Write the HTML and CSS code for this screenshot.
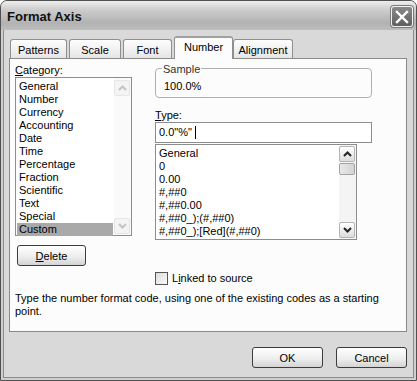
FILE: index.html
```html
<!DOCTYPE html>
<html lang="en">
<head>
  <meta charset="UTF-8" />
  <title>Format Axis</title>
  <link rel="stylesheet" href="styles.css">
</head>
<body>
  <div class="window">
    <div class="titlebar">
      <span class="title">Format Axis</span>
      <span class="close">
        <svg width="14" height="14" viewBox="0 0 14 14"><path d="M2 2L12 12M12 2L2 12" stroke="#fff" stroke-width="2.4" stroke-linecap="square"/></svg>
      </span>
    </div>
    <div class="client">
      <div class="tabs">
        <span class="tab tab-patterns">Patterns</span>
        <span class="tab tab-scale">Scale</span>
        <span class="tab tab-font">Font</span>
        <span class="tab tab-number active">Number</span>
        <span class="tab tab-align">Alignment</span>
      </div>
      <div class="panel">
        <div class="cols">
          <div class="col-left">
            <div class="lbl"><u>C</u>ategory:</div>
            <div class="listbox cat">
              <ul class="items">
                <li>General</li>
                <li>Number</li>
                <li>Currency</li>
                <li>Accounting</li>
                <li>Date</li>
                <li>Time</li>
                <li>Percentage</li>
                <li>Fraction</li>
                <li>Scientific</li>
                <li>Text</li>
                <li>Special</li>
                <li class="sel">Custom</li>
              </ul>
              <div class="vscroll off">
                <span class="sbtn"><svg width="9" height="6" viewBox="0 0 9 6"><path d="M1 5L4.5 1.5L8 5" fill="none" stroke="#c4c4c4" stroke-width="2"/></svg></span>
                <span class="track"></span>
                <span class="sbtn"><svg width="9" height="6" viewBox="0 0 9 6"><path d="M1 1L4.5 4.5L8 1" fill="none" stroke="#c4c4c4" stroke-width="2"/></svg></span>
              </div>
            </div>
            <button class="btn delete"><u>D</u>elete</button>
          </div>
          <div class="col-right">
            <div class="sample">
              <span class="legend">Sample</span>
              <div class="sample-val">100.0%</div>
            </div>
            <div class="lbl type-lbl"><u>T</u>ype:</div>
            <div class="input">0.0"%"&nbsp;<span class="caret"></span></div>
            <div class="listbox types">
              <ul class="items">
                <li>General</li>
                <li>0</li>
                <li>0.00</li>
                <li>#,##0</li>
                <li>#,##0.00</li>
                <li>#,##0_);(#,##0)</li>
                <li>#,##0_);[Red](#,##0)</li>
              </ul>
              <div class="vscroll">
                <span class="sbtn"><svg width="9" height="6" viewBox="0 0 9 6"><path d="M1 5L4.5 1.5L8 5" fill="none" stroke="#222" stroke-width="2"/></svg></span>
                <span class="track"><span class="thumb"></span></span>
                <span class="sbtn"><svg width="9" height="6" viewBox="0 0 9 6"><path d="M1 1L4.5 4.5L8 1" fill="none" stroke="#222" stroke-width="2"/></svg></span>
              </div>
            </div>
            <label class="check"><span class="box"></span>L<u>i</u>nked to source</label>
          </div>
        </div>
        <p class="desc">Type the number format code, using one of the existing codes as a starting point.</p>
      </div>
      <div class="actions">
        <button class="btn">OK</button>
        <button class="btn">Cancel</button>
      </div>
    </div>
  </div>
</body>
</html>
```

FILE: styles.css
```css
* {
  box-sizing: border-box;
}
body {
  margin: 0;
  font-family: "Liberation Sans", Arial, sans-serif;
  font-size: 11px;
  color: #000;
  background: #fff;
}
ul {
  margin: 0;
  padding: 0;
  list-style: none;
}
.window {
  width: 417px;
  height: 381px;
  background: #d9d9d9;
  border: 1px solid #505050;
  border-radius: 7px 7px 0 0;
  box-shadow: inset 0 0 0 2px #cfcfcf, inset 0 0 0 3px #8c8c8c;
  overflow: hidden;
}
.titlebar {
  height: 29px;
  display: flex;
  align-items: center;
  justify-content: space-between;
  padding: 0 3px 0 6px;
  background: linear-gradient(#efefef, #cdcdcd 30%, #b2b2b2 75%, #bdbdbd);
}
.title {
  font-size: 13px;
  font-weight: 700;
  color: #111;
  margin-top: 2px;
}
.close {
  width: 22px;
  height: 21px;
  margin-top: 2px;
  display: flex;
  align-items: center;
  justify-content: center;
  background: linear-gradient(#8a8a8a, #5e5e5e);
  border: 1px solid #f2f2f2;
  border-radius: 3px;
  box-shadow: 0 0 0 1px #7a7a7a;
}
.client {
  padding: 6px 10px 0 8px;
}
.tabs {
  display: flex;
  align-items: flex-end;
  height: 22px;
  padding-left: 1px;
}
.tab {
  height: 19px;
  margin-right: 2px;
  border: 1px solid #8f8f8f;
  border-bottom: none;
  border-radius: 3px 3px 0 0;
  background: linear-gradient(#fdfdfd, #e6e6e6);
  display: flex;
  align-items: center;
  justify-content: center;
  font-size: 11px;
  padding-top: 2px;
}
.tab-patterns { width: 57px; }
.tab-scale { width: 52px; }
.tab-font { width: 49px; }
.tab-number {
  width: 59px;
  height: 23px;
  margin-bottom: -1px;
  margin-right: 0;
  background: #fcfcfc;
  border-top: 2px solid #a0a0a0;
  position: relative;
  z-index: 1;
  padding-top: 0;
  padding-bottom: 4px;
}
.tab-align { width: 60px; }
.panel {
  width: 398px;
  height: 274px;
  border: 1px solid #8a8a8a;
  background: #fcfcfc;
  padding: 4px 5px 0 5px;
}
.cols {
  display: flex;
  gap: 23px;
}
.col-left {
  width: 117px;
  display: flex;
  flex-direction: column;
  align-items: flex-start;
}
.col-right {
  width: 217px;
  display: flex;
  flex-direction: column;
  align-items: flex-start;
}
.lbl {
  font-size: 11px;
  line-height: 14px;
  height: 14px;
}
.listbox {
  display: flex;
  border: 1px solid #8d8d8d;
  background: #fff;
  font-size: 11px;
}
.listbox .items {
  flex: 1;
  padding: 2px 1px 0 1px;
}
.listbox li {
  height: 13px;
  line-height: 13px;
  padding-left: 2px;
  white-space: nowrap;
}
.listbox li.sel {
  background: #a9a9a9;
}
.cat {
  width: 117px;
  height: 159px;
}
.vscroll {
  width: 17px;
  display: flex;
  flex-direction: column;
  padding: 2px 1px 1px 0;
  background: #f4f4f4;
}
.vscroll.off {
  background: #fafafa;
}
.sbtn {
  height: 16px;
  display: flex;
  align-items: center;
  justify-content: center;
  border: 1px solid #b5b5b5;
  border-radius: 2px;
  background: linear-gradient(#ffffff, #dcdcdc);
}
.off .sbtn {
  border-color: #e6e6e6;
  background: #f4f4f4;
}
.track {
  flex: 1;
}
.thumb {
  display: block;
  height: 12px;
  margin-top: 1px;
  border: 1px solid #a5a5a5;
  border-radius: 2px;
  background: linear-gradient(90deg, #e8e8e8, #d4d4d4);
}
.btn {
  font-family: inherit;
  font-size: 11px;
  height: 21px;
  border: 1px solid #3c3c3c;
  border-radius: 3px;
  background: linear-gradient(#ffffff, #ececec 60%, #d4d4d4);
  padding: 0;
  color: #000;
}
.delete {
  width: 69px;
  margin: 9px 0 0 2px;
}
.sample {
  width: 217px;
  height: 30px;
  margin-top: 5px;
  border: 1px solid #b0b0b0;
  border-radius: 4px;
  padding: 0 8px;
}
.legend {
  display: inline-block;
  font-size: 11px;
  line-height: 14px;
  margin: -7px 0 0 -2px;
  padding: 0 1px;
  background: #fcfcfc;
  color: #333;
  vertical-align: top;
}
.sample-val {
  font-size: 11px;
  line-height: 14px;
  margin-top: -2px;
}
.type-lbl {
  margin-top: 10px;
}
.input {
  width: 217px;
  height: 21px;
  margin-top: 0;
  border: 1px solid #8d8d8d;
  background: #fff;
  font-size: 11px;
  line-height: 19px;
  padding-left: 3px;
  display: flex;
  align-items: center;
}
.caret {
  display: inline-block;
  width: 1px;
  height: 13px;
  background: #000;
}
.types {
  width: 202px;
  height: 96px;
  margin-top: 1px;
}
.types .vscroll {
  padding: 1px 1px 1px 0;
}
.check {
  display: flex;
  align-items: center;
  margin-top: 32px;
  font-size: 11px;
  line-height: 13px;
}
.box {
  width: 13px;
  height: 13px;
  border: 1px solid #555;
  background: linear-gradient(135deg, #dcdcdc, #fafafa);
  margin-right: 4px;
}
.desc {
  margin: 7px 0 0 0;
  width: 384px;
  font-size: 11px;
  line-height: 13px;
}
.actions {
  display: flex;
  justify-content: flex-end;
  gap: 13px;
  margin-top: 15px;
  width: 398px;
}
.actions .btn {
  width: 71px;
}
```
